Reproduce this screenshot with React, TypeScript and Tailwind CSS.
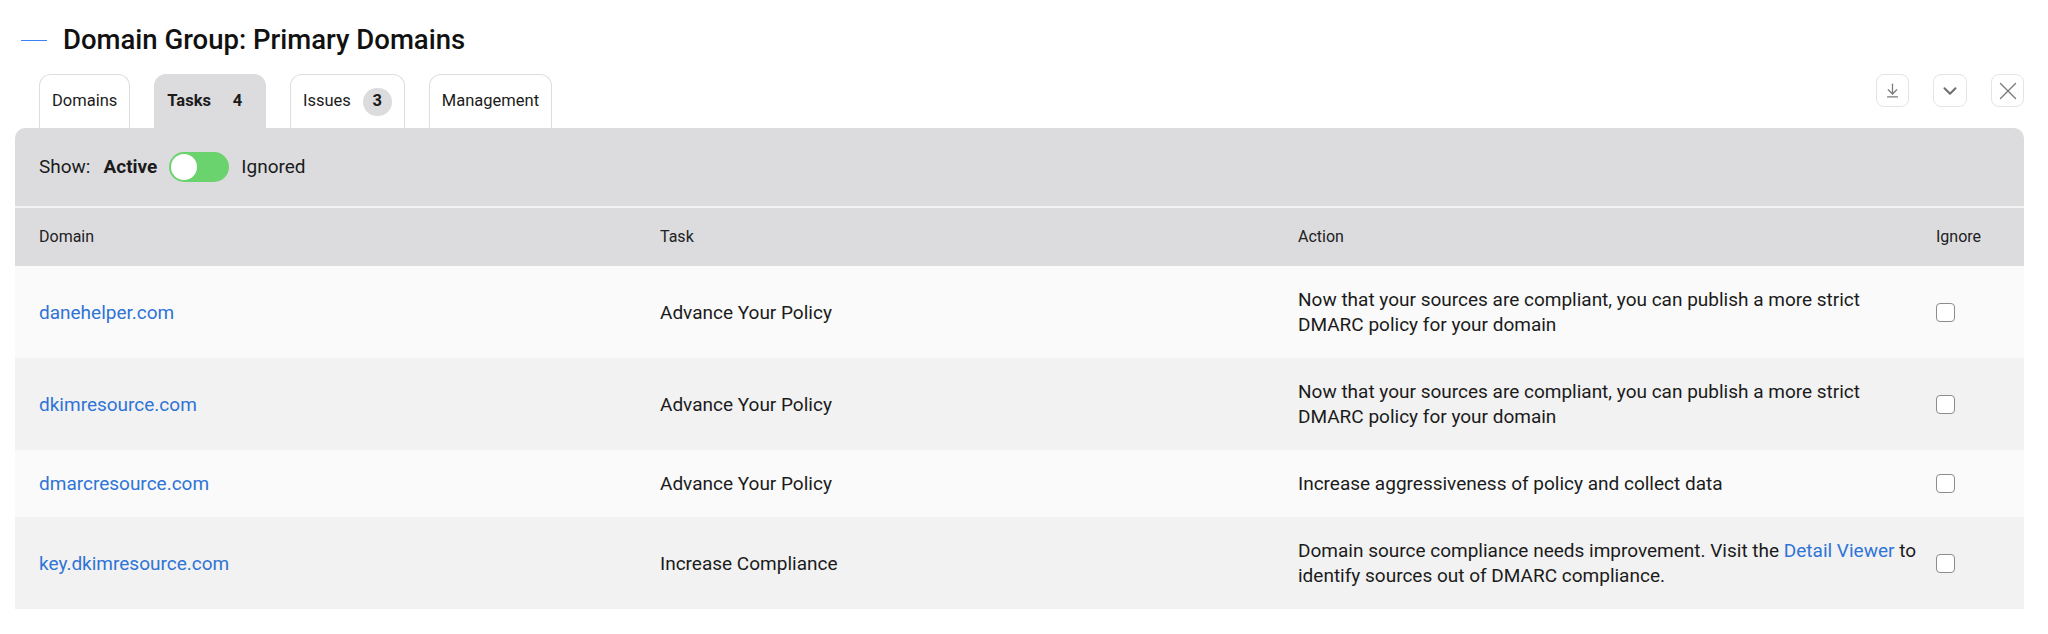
import { ArrowDownToLine, ChevronDown, X } from "lucide-react";

const tabs = [
  { label: "Domains" },
  { label: "Tasks", count: "4", active: true },
  { label: "Issues", count: "3" },
  { label: "Management" },
];

const rows = [
  {
    domain: "danehelper.com",
    task: "Advance Your Policy",
    action: (
      <>
        Now that your sources are compliant, you can publish a more strict DMARC policy for your domain
      </>
    ),
  },
  {
    domain: "dkimresource.com",
    task: "Advance Your Policy",
    action: (
      <>
        Now that your sources are compliant, you can publish a more strict DMARC policy for your domain
      </>
    ),
  },
  {
    domain: "dmarcresource.com",
    task: "Advance Your Policy",
    action: <>Increase aggressiveness of policy and collect data</>,
  },
  {
    domain: "key.dkimresource.com",
    task: "Increase Compliance",
    action: (
      <>
        Domain source compliance needs improvement. Visit the{" "}
        <a href="#" className="text-[#2f74d6]">
          Detail Viewer
        </a>{" "}
        to identify sources out of DMARC compliance.
      </>
    ),
  },
];

const App = () => {
  return (
    <div
      className="min-h-screen w-full bg-white text-[#1b1b1b]"
      style={{ fontFamily: "Roboto, 'Liberation Sans', sans-serif" }}
    >
      <header className="flex items-center h-[80px] pl-[21px]">
        <span className="block w-[26px] h-px bg-[#3b82f6]" />
        <h1 className="ml-4 text-[27.5px] font-medium text-[#111] leading-none">
          Domain Group: Primary Domains
        </h1>
      </header>

      <div className="ml-[15px] mr-[24px] -mt-[6px]">
        <div className="flex items-start justify-between pl-6">
          <nav className="flex gap-6">
            {tabs.map((tab) => (
              <button
                key={tab.label}
                className={
                  tab.active
                    ? "flex items-center h-[54px] pl-[13px] pr-[14px] rounded-t-xl bg-[#dcdcdf] text-[16.5px] font-bold"
                    : "flex items-center h-[54px] px-3 rounded-t-xl bg-white border border-b-0 border-[#dedede] text-[16.5px]"
                }
              >
                <span>{tab.label}</span>
                {tab.count && (
                  <span className="ml-3 flex items-center justify-center w-[29px] h-[28px] rounded-full bg-[#dcdcdf] font-bold">
                    {tab.count}
                  </span>
                )}
              </button>
            ))}
          </nav>
          <div className="flex gap-6">
            <button className="flex items-center justify-center w-[33px] h-[33px] rounded-lg border border-[#e4e4e4] text-[#7a7a7a]">
              <ArrowDownToLine size={17} strokeWidth={1.75} />
            </button>
            <button className="flex items-center justify-center w-[34px] h-[33px] rounded-lg border border-[#e4e4e4] text-[#6f6f6f]">
              <ChevronDown size={22} strokeWidth={2.25} />
            </button>
            <button className="flex items-center justify-center w-[33px] h-[33px] rounded-lg border border-[#e4e4e4] text-[#7a7a7a]">
              <X size={30} strokeWidth={1.1} />
            </button>
          </div>
        </div>

        <section className="rounded-t-[10px] bg-[#dcdcdf] overflow-hidden">
          <div className="flex items-center gap-3 h-[78px] px-6 text-[19px]">
            <span className="mr-px">Show:</span>
            <span className="font-bold">Active</span>
            <span className="flex items-center w-[60px] h-[30px] rounded-full bg-[#6bd36d] p-[2px]">
              <span className="block w-[26px] h-[26px] rounded-full bg-white" />
            </span>
            <span>Ignored</span>
          </div>
          <div className="h-[2px] bg-[#f4f4f5]" />
          <div className="grid grid-cols-[621px_638px_638px_1fr] items-center h-[58px] px-6 text-[16px] text-[#222]">
            <span>Domain</span>
            <span>Task</span>
            <span>Action</span>
            <span>Ignore</span>
          </div>

          {rows.map((row, i) => (
            <div
              key={row.domain}
              className={
                "grid grid-cols-[621px_638px_638px_1fr] items-center px-6 py-[21px] text-[19px] leading-[25px] " +
                (i % 2 === 0 ? "bg-[#fafafa]" : "bg-[#f2f2f2]")
              }
            >
              <a href="#" className="text-[#2f74d6]">
                {row.domain}
              </a>
              <span>{row.task}</span>
              <p className="w-[626px]">{row.action}</p>
              <span className="block w-[19px] h-[19px] rounded-[4px] border-[1.5px] border-[#8c8c8c] bg-white" />
            </div>
          ))}
        </section>
      </div>
    </div>
  );
};

export default App;
